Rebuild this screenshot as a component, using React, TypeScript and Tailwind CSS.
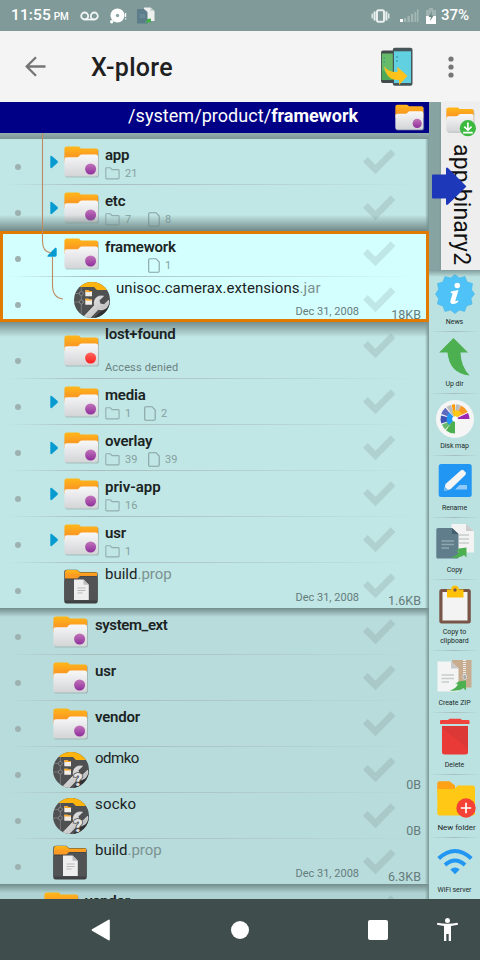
import React from "react";

type Kind = "folder" | "denied" | "jar" | "prop";

function Defs() {
  return (
    <svg className="absolute h-0 w-0" aria-hidden="true">
      <defs>
        <linearGradient id="orange" x1="0" y1="0" x2="0" y2="1">
          <stop offset="0" stopColor="#ffb818" />
          <stop offset="0.6" stopColor="#fb9a22" />
        </linearGradient>
        <linearGradient id="white" x1="0" y1="0" x2="0" y2="1">
          <stop offset="0" stopColor="#f8f8f9" />
          <stop offset="1" stopColor="#d3d4d6" />
        </linearGradient>
        <linearGradient id="purple" x1="0" y1="0" x2="0" y2="1">
          <stop offset="0" stopColor="#c274ba" />
          <stop offset="1" stopColor="#8f2f9c" />
        </linearGradient>
        <linearGradient id="red" x1="0" y1="0" x2="0" y2="1">
          <stop offset="0" stopColor="#ff6a61" />
          <stop offset="1" stopColor="#ff1d1d" />
        </linearGradient>
        <linearGradient id="steel" x1="0" y1="0" x2="1" y2="1">
          <stop offset="0" stopColor="#f4f4f4" />
          <stop offset="1" stopColor="#a9a9a9" />
        </linearGradient>
        <clipPath id="disc">
          <circle cx="18" cy="18" r="18" />
        </clipPath>
      </defs>
    </svg>
  );
}

function FolderArt({ dot }: { dot?: string }) {
  return (
    <>
      <path d="M1.2 3.5Q1.2 1 3.5 1H14.5Q16 1 16.5 2.4L17 3.2H33Q35 3.2 35 5.2V29Q35 31.6 32.5 31.6H3.7Q1.2 31.6 1.2 29Z" fill="#8b9c9c" opacity=".55" />
      <path d="M.4 3Q.4.5 3 .5H14Q15.300.5 16 1.800L16.600 2.400H32Q34 2.400 34 4.400V16H.4Z" fill="url(#orange)" />
      <path d="M.4 13.500Q.4 11.300 3 11.300H12.700Q14 11.300 14.800 10.400L16 9Q16.700 8.400 18 8.400H31.700Q34 8.400 34 10.700V28.200Q34 30.500 31.700 30.500H2.700Q.4 30.500 .4 28.200Z" fill="url(#white)" />
      {dot && <circle cx="26.600" cy="23" r="5.500" fill={dot} />}
    </>
  );
}

function FolderIcon({ dot = "url(#purple)" }: { dot?: string }) {
  return (
    <svg width="36" height="33" viewBox="0 0 36 33">
      <FolderArt dot={dot} />
    </svg>
  );
}

function PropIcon() {
  return (
    <svg width="36" height="36" viewBox="0 0 36 36">
      <path d="M.3 3Q.3.8 3 .8H13L16 3H31.500Q33.700 3 33.700 5V32.500Q33.700 34.600 31.500 34.600H2.500Q.3 34.600 .3 32.500Z" fill="#3f4142" />
      <path d="M1 3Q1 1 3 1H13L16 3.400H33V7H16L14 9.500H1Z" fill="url(#orange)" />
      <path d="M.3 12.500Q.3 10.500 2.500 10.500H12L16 7.500H31.500Q33.700 7.500 33.700 9.500V31.500H.3Z" fill="#525354" />
      <path d="M10 10.500H19.500L24.800 15.800V31H10Z" fill="#eee" />
      <path d="M19.500 10.500V15.800H24.800Z" fill="#bcbcbc" />
      <path d="M13.500 19H21.500M13.500 21.500H21.500M13.500 24H18.500" stroke="#b7b7b7" strokeWidth="1.200" />
    </svg>
  );
}

function JarIcon({ question }: { question?: boolean }) {
  return (
    <svg width="36" height="36" viewBox="0 0 36 36">
      <g clipPath="url(#disc)">
        <rect width="36" height="36" fill="#4f5051" />
        <path d="M0 0H36V8H23L20 5H0Z" fill="#fdb40f" />
        <path d="M20 36L36 21V36Z" fill="#303132" />
        <path d="M0 11.500H10M0 20H10M7.300 5V34" stroke="#8c8d8d" strokeWidth=".7" />
        <circle cx="7.300" cy="11.500" r="2" fill="#4f5051" stroke="#999" strokeWidth=".7" />
        <circle cx="7.300" cy="20" r="2" fill="#4f5051" stroke="#999" strokeWidth=".7" />
        <path d="M11.300 8.300H14.500L15.300 9H18V14.300H11.300Z" fill="#f2eee7" />
        <path d="M11.300 8.300H14.500L15.300 9H18V10H11.300Z" fill="#fba31d" />
        <path d="M11.300 16.700H14.500L15.300 17.400H18V22.700H11.300Z" fill="#f2eee7" />
        <path d="M11.300 16.700H14.500L15.300 17.400H18V18.500H11.300Z" fill="#fba31d" />
        <path d="M29.500 14.200Q24 13 21.300 17Q19.600 20 20.500 23.400L9 35.500L14 38L24.300 27.300Q29 29 32.600 25.800Q35.300 23 34.500 18.200L30 22.800L26.100 21.900L25.100 18.300Z" fill="url(#steel)" stroke="#e6e6e6" strokeWidth=".7" />
        {question && (
          <text x="20.500" y="34" fontFamily="Roboto, sans-serif" fontWeight="900" fontSize="18" fill="#e4e4e4" stroke="#4a4a4a" strokeWidth="1.600" paintOrder="stroke">?</text>
        )}
      </g>
    </svg>
  );
}

function Check() {
  return (
    <svg className="absolute left-[363px] top-[10px]" width="33" height="26" viewBox="0 0 33 26">
      <path d="M0 12.800L4.700 8.100L12.500 15.800L27.700.3L32.400 5L12.500 25.300Z" fill="#5c7272" opacity=".17" />
    </svg>
  );
}

function FolderOutline() {
  return (
    <svg className="w-[15px] shrink-0" height="13" viewBox="0 0 15 13">
      <path d="M.8 1.600Q.8.8 1.600.8H5.300L7 2.600H13.200Q14.100 2.600 14.100 3.500V11Q14.100 11.900 13.200 11.900H1.700Q.8 11.900.8 11Z" fill="none" stroke="#92aead" strokeWidth="1.100" />
    </svg>
  );
}

function FileOutline() {
  return (
    <svg className="w-[12px] shrink-0" height="15" viewBox="0 0 12 15">
      <path d="M.7 1.700Q.7.7 1.700.7H8L11.200 4V13Q11.200 14.200 10.200 14.200H1.700Q.7 14.200.7 13.200Z" fill="none" stroke="#87a3a2" strokeWidth="1.100" />
    </svg>
  );
}

interface RowProps {
  name: string;
  ext?: string;
  kind?: Kind;
  level: 1 | 2 | 3;
  expand?: "closed" | "open";
  dirs?: string;
  files?: string;
  narrow?: boolean;
  date?: string;
  size?: string;
  note?: string;
  last?: boolean;
  question?: boolean;
  track?: string;
}

function Row({ name, ext, kind = "folder", level, expand, dirs, files, narrow, date, size, note, last, question, track = "" }: RowProps) {
  const isFile = kind === "jar" || kind === "prop";
  const indent = level === 1 ? "w-[32px]" : level === 2 ? "w-[43px]" : "w-[53px]";
  const iconTop = note ? "pt-[12px]" : kind === "jar" ? "pt-[5px]" : kind === "prop" ? "pt-[6px]" : "pt-[7px]";
  return (
    <div className={`relative flex w-[429px] shrink-0 ${note ? "h-[56px]" : "h-[46px]"}`}>
      <div className={`flex w-[21px] shrink-0 justify-end ${note ? "pt-[35px]" : "pt-[25px]"}`}>
        <span className="h-[6px] w-[6px] rounded-full bg-[#9db1b0]" />
      </div>
      <div className={`flex shrink-0 justify-end ${expand ? "w-[43px] pr-[5px] pt-[16px]" : indent}`}>
        {expand === "closed" && (
          <svg className="relative -left-px" width="8" height="14" viewBox="0 0 8 14">
            <path d="M.3 2Q.3 .4 1.800 1L7.300 5.800Q8.500 7 7.300 8L1.800 13Q.3 13.600 .3 12Z" fill="#069bd0" />
          </svg>
        )}
        {expand === "open" && (
          <svg className="relative -left-px" width="11" height="11" viewBox="0 0 11 11">
            <path d="M8.200.8Q9.600.2 9.700 1.700V8.300Q9.700 9.600 8.200 9.700H1.200Q-.2 9.600 1 8Z" fill="#069bd0" />
          </svg>
        )}
      </div>
      <div className={`shrink-0 ${level === 2 ? "w-[41px]" : "w-[42px]"} ${iconTop}`}>
        {kind === "folder" && <FolderIcon />}
        {kind === "denied" && <FolderIcon dot="url(#red)" />}
        {kind === "prop" && <PropIcon />}
        {kind === "jar" && <JarIcon question={question} />}
      </div>
      <div className="flex flex-1 flex-col">
        <p className={`whitespace-nowrap text-[15px] leading-[18px] text-[#1b2323] ${isFile ? `mt-[2px] ${track}` : `${note ? "mt-[2px]" : "mt-[7px]"} font-semibold ${track || "tracking-[-0.2px]"}`}`}>
          {name}
          {ext && <span className="text-[#7b9291]">{ext}</span>}
        </p>
        {(dirs || files) && (
          <div className="mt-[2px] flex h-[15px] items-center text-[11px] leading-[15px] text-[#86a19f]">
            <div className={`flex shrink-0 items-center gap-[5px] ${narrow ? "w-[39px]" : "w-[43px]"}`}>
              {dirs && (
                <>
                  <FolderOutline />
                  <span>{dirs}</span>
                </>
              )}
            </div>
            {files && (
              <div className="flex items-center gap-[5px]">
                <FileOutline />
                <span>{files}</span>
              </div>
            )}
          </div>
        )}
        {note && <p className="mt-[18px] text-[11px] leading-[14px] tracking-[0.150px] text-[#6a8281]">{note}</p>}
      </div>
      <Check />
      {date && <span className="absolute bottom-[5px] right-[70px] text-[11px] leading-[13px] text-[#657c7b]">{date}</span>}
      {size && <span className="absolute bottom-[1px] right-[8px] text-[12.500px] leading-[15px] text-[#657c7b]">{size}</span>}
      {!last && <span className="absolute bottom-0 left-[8px] h-px w-[410px] bg-linear-to-r from-transparent via-[#a8bcbc] via-20% to-transparent" />}
    </div>
  );
}

function Toolbar() {
  const items: { label: string; h: string; w?: string; icon: React.ReactNode }[] = [
    {
      label: "News", h: "h-[62px]",
      icon: (
        <>
          <path d="M20 .5L24.500 4L30 2.500L32 8L37.500 9.500L36.500 15.500L39.500 20L36 24.500L37 30L31.500 32L29.500 37.500L24.500 36L20 39.500L15.500 36L10 37.500L8 32L2.500 30L3.500 24.500L.5 20L3.500 15.500L2.500 9.500L8 8L10 2.500L15.500 4Z" fill="#4fc3f7" stroke="#45b3e5" strokeWidth=".6" strokeLinejoin="round" />
          <circle cx="22.300" cy="11.500" r="2.800" fill="#fff" />
          <path d="M16 17.500L23.500 16L20.300 26.700Q20.500 28 23 26.200L23.300 27.800Q20.500 30.500 17 30Q14.800 29.300 15.500 26.600L17.600 19.500L15.800 19Z" fill="#fff" />
        </>
      ),
    },
    {
      label: "Up dir", h: "h-[62px]",
      icon: <path d="M18.500 1L33 15.500H25.500Q25.800 29 34.500 38.500Q14.500 36.500 12.500 15.500H4.200Z" fill="#4caf50" />,
    },
    {
      label: "Disk map", h: "h-[62px]",
      icon: (
        <>
          <circle cx="20" cy="20" r="19" fill="#f5f5f5" />
          <path d="M20 20V34.500A14.500 14.500 0 0 1 11 31.400L16 24Z" fill="#4caf50" />
          <path d="M20 20L10.200 30.500A14 14 0 0 1 7 25.500L14 22.600Z" fill="#68b96b" />
          <path d="M20 20L6.300 24.500A14.500 14.500 0 0 1 6 16.500L14 18.500Z" fill="#3f51b5" />
          <path d="M20 20L6.300 15A14.500 14.500 0 0 1 10.400 8.700L15.500 15Z" fill="#5c6bc0" />
          <path d="M20 20L11.500 8A14.500 14.500 0 0 1 16 6L19 14Z" fill="#bdbdbd" />
          <path d="M20 20L16.700 5.700A14.500 14.500 0 0 1 20 5.300V14Z" fill="#ff9800" />
          <path d="M20 20L20.800 5.300A14.500 14.500 0 0 1 25.500 6.400L23 14Z" fill="#bdbdbd" />
          <path d="M20 20L26 6.600A14.500 14.500 0 0 1 32.700 13L24 17Z" fill="#f79a22" />
          <path d="M20 20L33 14A14.500 14.500 0 0 1 34.500 20Z" fill="#9c27b0" />
          <path d="M20 20L17 12A8.500 8.500 0 0 1 27 14.500Z" fill="#ffc818" />
          <path d="M20 20L14 26A8.500 8.500 0 0 1 14.500 13.600Z" fill="#2196f3" />
          <circle cx="20" cy="20" r="2.800" fill="#fff" />
        </>
      ),
    },
    {
      label: "Rename", h: "h-[62px]",
      icon: (
        <>
          <rect x="3.700" y="3" width="33" height="33" rx="2.500" fill="#2196f3" />
          <path d="M9 30L10.500 23L26 9.300Q27.500 8.200 29 9.700L30.500 11.300Q31.500 12.700 30.300 14L15.500 28.300Z" fill="#f5f5f5" />
          <path d="M20 28.500L24.500 24H32V28.500Z" fill="#90caf9" />
          <path d="M9 30L10 26L13 29Z" fill="#64b5f6" />
        </>
      ),
    },
    {
      label: "Copy", h: "h-[62px]",
      icon: (
        <>
          <path d="M16.500 1H31L39 8V29.500H16.500Z" fill="#f3f3f3" />
          <path d="M31 1V8H39Z" fill="#ccc" />
          <path d="M24 12H34M24 16H34M24 20H34" stroke="#c7cdce" strokeWidth="1.500" />
          <path d="M1.300 6.500Q1.300 5 3 5H17L23.500 11V34.500Q23.500 35.500 22 35.500H3Q1.300 35.500 1.300 34Z" fill="#607d8b" />
          <path d="M17 5V11H23.500Z" fill="#44606d" />
          <path d="M6.500 18H19M6.500 21.500H19M6.500 25H14" stroke="#8fa6b0" strokeWidth="1.500" />
          <path d="M16 34.500Q24 31.500 23.600 28L20.500 28.700L24 25.500L31.500 24.500V34.500L29 32Q24.500 35.500 16 34.500Z" fill="#4caf50" />
        </>
      ),
    },
    {
      label: "Copy to\nclipboard", h: "h-[71px]",
      icon: (
        <>
          <rect x="4.300" y="4" width="31.500" height="34.500" rx="2.500" fill="#795548" />
          <rect x="7.500" y="7" width="25" height="28.500" fill="#f3f3f3" />
          <path d="M12 4.500H16Q16.500 .5 20 .5Q23.500.5 24 4.500H28.500V12.500H12Z" fill="#ffc107" />
          <circle cx="20" cy="5" r="1.700" fill="#795548" />
        </>
      ),
    },
    {
      label: "Create ZIP", h: "h-[62px]",
      icon: (
        <>
          <path d="M17 4H36.500V31.500H17Z" fill="#c8ac8f" />
          <path d="M29.500 4V19.500" stroke="#eee" strokeWidth="3" strokeDasharray="1 1" />
          <rect x="28" y="18.500" width="3.500" height="5" rx="1.500" fill="#aaa" stroke="#eee" strokeWidth=".6" />
          <path d="M2.500 5.500H16L23.500 12.500V35.500H2.500Z" fill="#f4f4f4" />
          <path d="M16 5.500V12.500H23.500Z" fill="#c9c9c9" />
          <path d="M6.500 19H19M6.500 22.500H19M6.500 26H14" stroke="#c8cccc" strokeWidth="1.400" />
          <path d="M15 34.500Q23 31.500 22.600 27.500L20 28.200L23.500 25.500L31 24.500V34.500L28.500 32Q24 35.500 15 34.500Z" fill="#4caf50" />
        </>
      ),
    },
    {
      label: "Delete", h: "h-[62px]",
      icon: (
        <>
          <path d="M5 3Q5 2 6.500 2H13L14.500.8H25.500L27 2H33Q34.500 2 34.500 3V6H5Z" fill="#f0433c" />
          <path d="M7 8H33V34Q33 36.500 30.500 36.500H9.500Q7 36.500 7 34Z" fill="#ea3a37" />
          <path d="M7 8H33V31L7 10Z" fill="#dc3936" />
        </>
      ),
    },
    {
      label: "New folder", h: "h-[63px]", w: "text-[8px] relative left-[2px]",
      icon: (
        <>
          <path d="M2.300 3.500Q2.300 1.300 4.500 1.300H14.500L20 5.500V13H2.300Z" fill="#ffa114" />
          <path d="M2.300 9H18Q20 9 21.500 7L22.500 5.500H38Q40 5.500 40 8V33Q40 35.500 37.500 35.500H4.500Q2.300 35.500 2.300 33Z" fill="#ffc814" />
          <circle cx="31" cy="28" r="9.700" fill="#f44336" />
          <path d="M31 22.800V33.200M25.800 28H36.200" stroke="#fff" strokeWidth="1.700" />
        </>
      ),
    },
    {
      label: "WiFi server", h: "h-[61px]",
      icon: (
        <g fill="none" stroke="#2196f3" strokeWidth="4">
          <path d="M3.700 15.500Q20 .5 36.300 15.500" />
          <path d="M10 22Q20 13 30 22" />
          <path d="M15.300 26.500Q20 22.500 24.700 26.500L20 31.300Z" fill="#2196f3" stroke="none" />
        </g>
      ),
    },
  ];
  return (
    <div className="relative flex h-[629px] w-[51px] flex-col bg-[#bbe1e0]">
      {items.map((it, i) => (
        <div key={it.label} className={`relative flex shrink-0 flex-col items-center ${i === 0 ? "pt-[4px]" : "pt-[5px]"} ${it.h}`}>
          <svg width="40" height="40" viewBox="0 0 40 40" className="overflow-visible">{it.icon}</svg>
          <span className={`${i === 0 ? "mt-[4px]" : "mt-[3px]"} whitespace-pre text-center leading-[9px] tracking-[-0.050px] text-[#1c2b2b] ${it.w ?? "text-[7px]"}`}>{it.label}</span>
          {i < items.length - 1 && <span className="absolute bottom-0 left-0 h-px w-full bg-linear-to-r from-transparent via-[#a4bebd] to-transparent" />}
        </div>
      ))}
      <div className="absolute left-0 top-0 h-[7px] w-full bg-linear-to-b from-[#809c9b] to-transparent" />
    </div>
  );
}

function StatusBar() {
  return (
    <div className="flex h-[31px] items-center bg-[#7f9a98] pl-[11px] text-white">
      <span className="w-[69px] whitespace-nowrap text-[15.500px] font-medium leading-[31px] tracking-[0.1px]">
        11:55<span className="ml-[3px] text-[10px] tracking-[-0.3px]">PM</span>
      </span>
      <svg width="19" height="10" viewBox="0 0 19 10" fill="none" stroke="#f1f5f4" strokeWidth="1.800">
        <circle cx="4.700" cy="5" r="3.500" />
        <circle cx="14.300" cy="5" r="3.500" />
        <path d="M4.700 8.500H14.300" />
      </svg>
      <svg className="ml-[11px]" width="18" height="16" viewBox="0 0 18 16" fill="#fff">
        <circle cx="7.500" cy="7.500" r="7" />
        <circle cx="1.700" cy="13.700" r="1.700" />
        <circle cx="7.500" cy="7.500" r="1.700" fill="#8ba8a5" />
        <path d="M15 5H16.200V9H15ZM15 10.300H16.200V11.500H15Z" />
      </svg>
      <svg className="ml-[9px]" width="18" height="17" viewBox="0 0 18 17">
        <path d="M7 .5H13.500L17.500 4V14H7Z" fill="#eef0ef" />
        <path d="M13.500 .5V4H17.500Z" fill="#c4cdcb" />
        <path d="M0 2H7L10.500 5V16.500H0Z" fill="#5d7d8b" />
        <path d="M2.500 8H8M2.500 10H8" stroke="#7895a1" />
        <path d="M7.500 15Q10.500 14 10 12L14 11.500V16L12.700 15Q10.500 16.500 7.500 15Z" fill="#48ad4b" />
      </svg>
      <svg className="ml-[216px]" width="19" height="14" viewBox="0 0 19 14" fill="none" stroke="#e9efee">
        <rect x="6" y="1.200" width="7" height="11.500" rx="1.500" strokeWidth="2" />
        <path d="M3.600 2.500V11.500M15.400 2.500V11.500" strokeWidth="2" />
        <path d="M1.300 4.500V9.500M17.700 4.500V9.500" strokeWidth="1.700" opacity=".85" />
      </svg>
      <svg className="ml-[10px]" width="19" height="14" viewBox="0 0 19 14" fill="#a2b6b4">
        <rect x="0" y="10" width="3" height="3" fill="#fff" />
        <path d="M4 9H6.300V13H4ZM7.500 7H9.800V13H7.500ZM11 5H13.300V13H11ZM14.500 3H16.300V13H14.500ZM17 .3H18.500V13H17Z" />
      </svg>
      <svg className="ml-[7px]" width="10" height="16" viewBox="0 0 10 16">
        <path d="M3 0H7V2H10V16H0V2H3Z" fill="#9fb4b2" />
        <path d="M0 8H10V16H0Z" fill="#fff" />
        <path d="M6 3L2.500 9H5L3.800 13.500L7.700 7.500H5.300Z" fill="#6b8784" />
      </svg>
      <span className="ml-[5px] text-[15px] font-medium leading-[31px]">37%</span>
    </div>
  );
}

function AppBar() {
  return (
    <div className="flex h-[71px] items-center bg-[#f4f4f4] pl-[25px]">
      <svg width="21" height="21" viewBox="0 0 21 21" fill="none" stroke="#757575" strokeWidth="2.300">
        <path d="M20.500 10.500H2M11 1.200L1.700 10.500L11 19.800" />
      </svg>
      <h1 className="ml-[45px] mt-[2px] w-[289px] text-[25px] font-medium leading-[32px] tracking-[0.300px] text-[#202020]">X-plore</h1>
      <svg width="33" height="40" viewBox="0 0 33 40">
        <rect x="1" y="3.500" width="19" height="32.500" rx="2" fill="#424b4b" />
        <rect x="1.800" y="6.500" width="18" height="26.500" fill="#66bb6a" />
        <path d="M1.800 22V33H14Z" fill="#50a958" />
        <rect x="12.800" y=".8" width="19.700" height="38" rx="2" fill="#455558" />
        <rect x="14" y="4.300" width="17" height="31.700" fill="#61d0e1" />
        <path d="M3.500 11H5M3.500 15H5M16 10H18M16 14H18" stroke="#348f92" />
        <path d="M4 19.500Q9 25.500 17.500 25V20L27.500 29L19 38V33Q7 34 4 19.500Z" fill="#ffc21a" />
      </svg>
      <svg className="ml-[35px]" width="6" height="22" viewBox="0 0 6 22" fill="#757575">
        <circle cx="3" cy="3" r="2.600" />
        <circle cx="3" cy="11" r="2.600" />
        <circle cx="3" cy="19" r="2.600" />
      </svg>
    </div>
  );
}

function SelectedGroup() {
  return (
    <div className="relative flex flex-col bg-[#d4ffff]">
      <Row level={2} name="framework" expand="open" files="1" />
      <Row level={3} name="unisoc.camerax.extensions" ext=".jar" kind="jar" date="Dec 31, 2008" size="18KB" last track="tracking-[0.050px]" />
      <div className="absolute inset-0 bottom-[1px] border-[3px] border-[#e07b00]" />
    </div>
  );
}

function FileList() {
  return (
    <div className="relative flex h-[766px] w-[429px] flex-col overflow-hidden bg-[#afd3d3]">
      <div className="h-[6px] shrink-0 bg-linear-to-b from-[#93afae] to-[#7d9593]" />
      <div className="relative flex flex-col bg-[#c0e6e5]">
        <Row level={2} name="app" expand="closed" dirs="21" />
        <Row level={2} name="etc" expand="closed" dirs="7" files="8" last />
        <div className="absolute bottom-0 left-0 h-[16px] w-full bg-linear-to-b from-transparent to-[#708887]" />
      </div>
      <SelectedGroup />
      <div className="relative flex flex-col bg-[#c0e6e5]">
        <div className="absolute -top-px left-0 h-[15px] w-full bg-linear-to-b from-[#768f8e] to-transparent" />
        <Row level={2} name="lost+found" kind="denied" note="Access denied" />
        <Row level={2} name="media" expand="closed" dirs="1" files="2" narrow />
        <Row level={2} name="overlay" expand="closed" dirs="39" files="39" />
        <Row level={2} name="priv-app" expand="closed" dirs="16" track="tracking-[0px]" />
        <Row level={2} name="usr" expand="closed" dirs="1" />
        <Row level={2} name="build" ext=".prop" kind="prop" date="Dec 31, 2008" size="1.6KB" last />
      </div>
      <div className="relative flex flex-col bg-[#b8dbdb]">
        <div className="absolute -top-px left-0 h-[9px] w-full bg-linear-to-b from-[#718c8b] to-transparent" />
        <Row level={1} name="system_ext" track="tracking-[-0.400px]" />
        <Row level={1} name="usr" />
        <Row level={1} name="vendor" />
        <Row level={1} name="odmko" kind="jar" size="0B" question track="tracking-[-0.500px]" />
        <Row level={1} name="socko" kind="jar" size="0B" question track="tracking-[0.200px]" />
        <Row level={1} name="build" ext=".prop" kind="prop" date="Dec 31, 2008" size="6.3KB" last />
      </div>
      <div className="relative flex h-[14px] pl-[44px]">
        <div className="absolute -top-px left-0 h-[9px] w-full bg-linear-to-b from-[#718c8b] to-transparent" />
        <div className="relative w-[41px] shrink-0 pt-[7px]"><FolderIcon /></div>
        <p className="mt-[7px] text-[15px] font-semibold leading-[18px] tracking-[-0.2px] text-[#1b2323]">vendor</p>
        <Check />
      </div>
      <svg className="absolute left-0 top-0" width="70" height="180" viewBox="0 0 70 180" fill="none" stroke="#bd8a61" strokeWidth="1.100">
        <path d="M42.500 0V108Q42.500 119 51 120M52.500 124V152Q52.500 165 63 166" />
      </svg>
      <div className="absolute right-0 top-[190px] h-[576px] w-[4px] bg-linear-to-r from-transparent to-[#799594]" />
      <div className="absolute right-0 top-[6px] h-[92px] w-[4px] bg-linear-to-r from-transparent to-[#799594]" />
    </div>
  );
}

function SideTab() {
  return (
    <div className="relative flex h-[168px] w-[51px] bg-[#87a3a2] pl-[12px]">
      <div className="flex w-[39px] flex-col items-center bg-[#eee] pt-[5px] shadow-sm">
        <svg width="30" height="31" viewBox="0 0 37 38">
          <FolderArt />
          <circle cx="27" cy="26" r="10" fill="#3cb93f" />
          <path d="M27 19V28M22.500 24L27 28.500L31.500 24M21 31.500H33" fill="none" stroke="#fff" strokeWidth="2" />
        </svg>
        <span className="mt-[6px] whitespace-nowrap text-[23px] leading-[24px] tracking-[0.150px] text-[#111] [writing-mode:vertical-rl]">app binary2</span>
      </div>
      <svg className="absolute left-[3px] top-[65px]" width="35" height="39" viewBox="0 0 35 39">
        <path d="M1 7.500H14V1.500Q14.500 0 16 1L34 19Q34.500 19.500 34 20L16 37.500Q14.500 38.500 14 37V31.500H1Q0 31.500 0 30.500V8.500Q0 7.500 1 7.500Z" fill="#1d38b9" />
      </svg>
    </div>
  );
}

function NavBar() {
  return (
    <div className="flex h-[61px] items-center bg-[#3f4d4c] pl-[91px]">
      <svg width="20" height="22" viewBox="0 0 20 22"><path d="M1 10.200L17.500.7Q18.700.2 18.800 1.500V20.500Q18.700 21.800 17.500 21.200L1 11.800Q0 11 1 10.200Z" fill="#fff" /></svg>
      <span className="ml-[120px] h-[18px] w-[18px] rounded-full bg-white" />
      <span className="ml-[119px] h-[20px] w-[20px] rounded-[2px] bg-white" />
      <svg className="ml-[49px]" width="21" height="23" viewBox="0 0 21 23" fill="#fff">
        <circle cx="10.500" cy="2.600" r="2.500" />
        <path d="M.3 4.800Q10.500 6.700 20.700 4.800L21 6.800L14 8V23H11.700V16H9.300V23H7V8L0 6.800Z" />
      </svg>
    </div>
  );
}

export default function App() {
  return (
    <div className="h-[960px] w-[480px] overflow-hidden font-['Roboto',sans-serif]">
      <Defs />
      <StatusBar />
      <AppBar />
      <div className="flex h-[797px]">
        <div className="flex w-[429px] flex-col">
          <div className="flex h-[31px] items-center justify-end bg-[#000086] pr-[4px] text-[18px] leading-[31px] text-white">
            <span className="-mt-[4px] mr-[38px] tracking-[0.050px]">/system/product/<b className="tracking-[-0.050px]">framework</b></span>
            <svg className="-ml-px" width="30" height="28" viewBox="0 0 36 33"><FolderArt dot="url(#purple)" /></svg>
          </div>
          <FileList />
        </div>
        <div className="flex w-[51px] flex-col">
          <SideTab />
          <Toolbar />
        </div>
      </div>
      <NavBar />
    </div>
  );
}
